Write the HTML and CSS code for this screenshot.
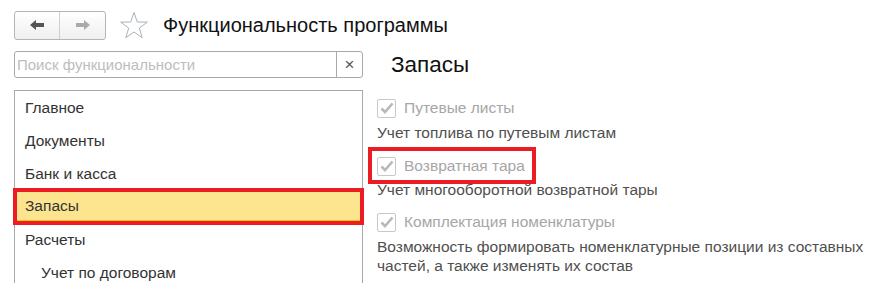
FILE: index.html
```html
<!DOCTYPE html>
<html lang="ru">

<head>
    <meta charset="UTF-8">
    <title>Функциональность программы</title>
    <link rel="stylesheet" href="styles.css">
</head>

<body>
    <div class="header">
        <div class="nav-buttons">
            <button class="nav-btn back">
                <svg width="16" height="12" viewBox="0 0 16 12"><path d="M1 6 L7 1 L7 4 L15 4 L15 8 L7 8 L7 11 Z" fill="#555"/></svg>
            </button>
            <button class="nav-btn forward">
                <svg width="16" height="12" viewBox="0 0 16 12"><path d="M15 6 L9 1 L9 4 L1 4 L1 8 L9 8 L9 11 Z" fill="#aaa"/></svg>
            </button>
        </div>
        <svg class="star" width="30" height="28" viewBox="0 0 30 28">
            <path d="M15 1.5 L18.3 11 L28.3 11.1 L20.3 17.1 L23.2 26.7 L15 21 L6.8 26.7 L9.7 17.1 L1.7 11.1 L11.7 11 Z" fill="none" stroke="#a9b1ba" stroke-width="1"/>
        </svg>
        <h1>Функциональность программы</h1>
    </div>

    <div class="content">
        <div class="sidebar">
            <div class="search">
                <input type="text" placeholder="Поиск функциональности">
                <button class="clear">×</button>
            </div>
            <ul class="sections">
                <li>Главное</li>
                <li>Документы</li>
                <li>Банк и касса</li>
                <li class="selected">Запасы</li>
                <li>Расчеты</li>
                <li class="sub">Учет по договорам</li>
            </ul>
        </div>

        <div class="options">
            <h2>Запасы</h2>
            <div class="option">
                <label class="check"><span class="box"><svg width="14" height="12" viewBox="0 0 14 12"><path d="M1.5 6.5 L5 10 L12.5 1.5" fill="none" stroke="#b8b8b8" stroke-width="2.6"/></svg></span>Путевые листы</label>
                <p>Учет топлива по путевым листам</p>
            </div>
            <div class="option">
                <label class="check marked"><span class="box"><svg width="14" height="12" viewBox="0 0 14 12"><path d="M1.5 6.5 L5 10 L12.5 1.5" fill="none" stroke="#b8b8b8" stroke-width="2.6"/></svg></span>Возвратная тара</label>
                <p>Учет многооборотной возвратной тары</p>
            </div>
            <div class="option">
                <label class="check"><span class="box"><svg width="14" height="12" viewBox="0 0 14 12"><path d="M1.5 6.5 L5 10 L12.5 1.5" fill="none" stroke="#b8b8b8" stroke-width="2.6"/></svg></span>Комплектация номенклатуры</label>
                <p>Возможность формировать номенклатурные позиции из составных<br>частей, а также изменять их состав</p>
            </div>
        </div>
    </div>
</body>

</html>
```

FILE: styles.css
```css
/* Сброс */
* {
    margin: 0;
    padding: 0;
    box-sizing: border-box;
    font-family: "Liberation Sans", Arial, sans-serif;
}

body {
    background-color: #fff;
    color: #333;
    overflow: hidden;
}

.header {
    display: flex;
    align-items: center;
    padding: 10px 14px 0 14px;
    height: 40px;
}

.nav-buttons {
    display: flex;
    border: 1px solid #b5b5b5;
    border-radius: 3px;
    background: linear-gradient(#ffffff, #efefef);
    height: 29px;
}

.nav-btn {
    width: 45px;
    height: 27px;
    background: none;
    border: none;
    display: flex;
    align-items: center;
    justify-content: center;
}

.nav-btn.back {
    border-right: 1px solid #cfcfcf;
}

.star {
    margin-left: 13px;
    margin-right: 14px;
}

h1 {
    font-size: 20px;
    font-weight: normal;
    color: #111;
}

.content {
    display: flex;
    padding: 11px 0 0 14px;
}

.sidebar {
    width: 349px;
}

.search {
    display: flex;
    border: 1px solid #a9a9a9;
    border-radius: 3px;
    height: 27px;
}

.search input {
    flex: 1;
    border: none;
    outline: none;
    padding: 0 2px;
    font-size: 15px;
    color: #333;
    background: none;
}

.search input::placeholder {
    color: #bdbdbd;
}

.search .clear {
    width: 26px;
    border: none;
    border-left: 1px solid #a9a9a9;
    background: none;
    font-size: 17px;
    color: #555;
}

.sections {
    list-style: none;
    margin-top: 12px;
    border: 1px solid #a9a9a9;
    border-bottom: none;
    height: 300px;
}

.sections li {
    height: 33px;
    line-height: 33px;
    padding-left: 10px;
    font-size: 15.5px;
    color: #333;
}

.sections li.sub {
    padding-left: 26px;
}

.sections li.selected {
    background-color: #fde58f;
    border-bottom: 3px solid #f5c400;
    line-height: 31px;
    outline: 4px solid #ec1c24;
    outline-offset: -2px;
}

.options {
    padding-left: 14px;
}

.options h2 {
    font-size: 22.5px;
    font-weight: normal;
    color: #111;
    padding-left: 14px;
    margin-top: 1px;
    height: 41px;
}

.check {
    display: inline-flex;
    align-items: center;
    height: 30px;
    font-size: 15.5px;
    color: #a6a6a6;
}

.check .box {
    width: 19px;
    height: 19px;
    border: 1px solid #c8c8c8;
    border-radius: 2px;
    margin-right: 8px;
    display: flex;
    align-items: center;
    justify-content: center;
}

.check.marked {
    outline: 4px solid #ec1c24;
    outline-offset: 0;
    height: 29px;
    margin: 1px 0 0 -5px;
    padding: 1px 7px 0 5px;
}

.option p {
    font-size: 15.5px;
    color: #4f4f4f;
    line-height: 19px;
    margin-bottom: 8px;
}
```
